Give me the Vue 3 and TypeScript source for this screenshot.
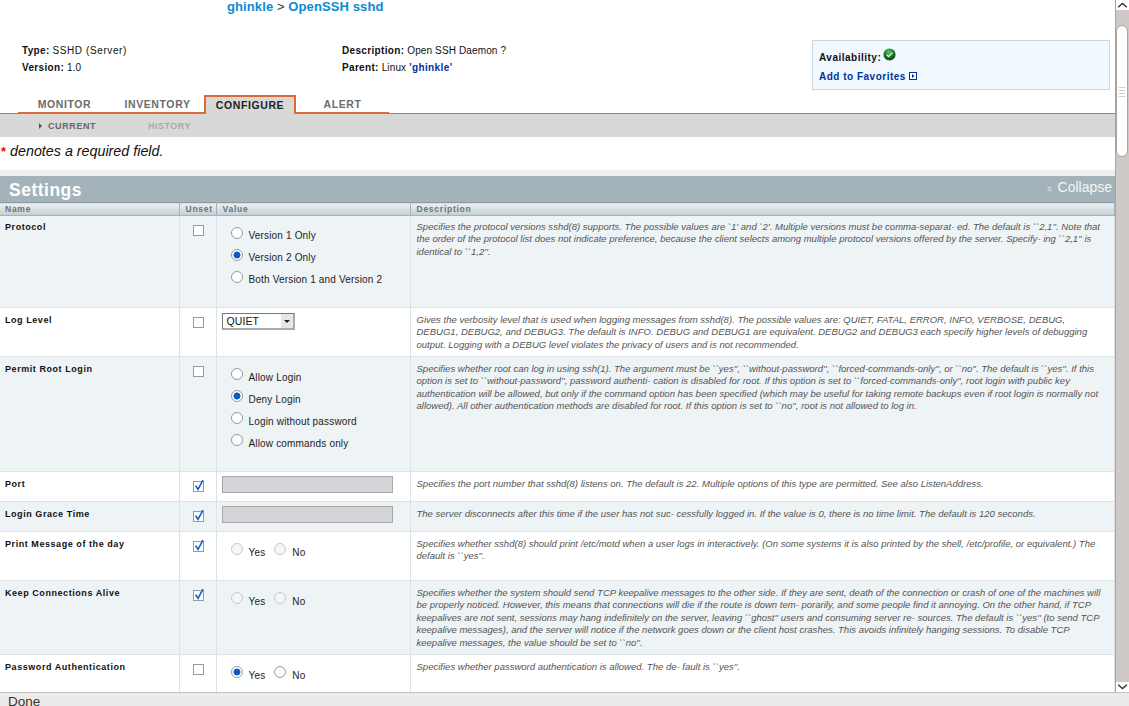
<script setup lang="ts">
type Kind = 'stack' | 'inline' | 'select' | 'input'
interface Opt { label: string; checked?: boolean }
interface Row {
  name: string
  unset: boolean
  kind: Kind
  height: number
  options?: Opt[]
  disabled?: boolean
  desc: string[]
}
const tabs = [
  { label: 'MONITOR', active: false },
  { label: 'INVENTORY', active: false },
  { label: 'CONFIGURE', active: true },
  { label: 'ALERT', active: false },
]
const rows: Row[] = [
  {
    name: 'Protocol', unset: false, kind: 'stack', height: 92,
    options: [{ label: 'Version 1 Only' }, { label: 'Version 2 Only', checked: true }, { label: 'Both Version 1 and Version 2' }],
    desc: [
      "Specifies the protocol versions sshd(8) supports. The possible values are `1' and `2'. Multiple versions must be comma-separat- ed. The default is ``2,1''. Note that",
      "the order of the protocol list does not indicate preference, because the client selects among multiple protocol versions offered by the server. Specify- ing ``2,1'' is",
      "identical to ``1,2''.",
    ],
  },
  {
    name: 'Log Level', unset: false, kind: 'select', height: 49,
    desc: [
      'Gives the verbosity level that is used when logging messages from sshd(8). The possible values are: QUIET, FATAL, ERROR, INFO, VERBOSE, DEBUG,',
      'DEBUG1, DEBUG2, and DEBUG3. The default is INFO. DEBUG and DEBUG1 are equivalent. DEBUG2 and DEBUG3 each specify higher levels of debugging',
      'output. Logging with a DEBUG level violates the privacy of users and is not recommended.',
    ],
  },
  {
    name: 'Permit Root Login', unset: false, kind: 'stack', height: 115,
    options: [{ label: 'Allow Login' }, { label: 'Deny Login', checked: true }, { label: 'Login without password' }, { label: 'Allow commands only' }],
    desc: [
      "Specifies whether root can log in using ssh(1). The argument must be ``yes'', ``without-password'', ``forced-commands-only'', or ``no''. The default is ``yes''. If this",
      "option is set to ``without-password'', password authenti- cation is disabled for root. If this option is set to ``forced-commands-only'', root login with public key",
      'authentication will be allowed, but only if the command option has been specified (which may be useful for taking remote backups even if root login is normally not',
      "allowed). All other authentication methods are disabled for root. If this option is set to ``no'', root is not allowed to log in.",
    ],
  },
  {
    name: 'Port', unset: true, kind: 'input', height: 30,
    desc: ['Specifies the port number that sshd(8) listens on. The default is 22. Multiple options of this type are permitted. See also ListenAddress.'],
  },
  {
    name: 'Login Grace Time', unset: true, kind: 'input', height: 30,
    desc: ['The server disconnects after this time if the user has not suc- cessfully logged in. If the value is 0, there is no time limit. The default is 120 seconds.'],
  },
  {
    name: 'Print Message of the day', unset: true, kind: 'inline', height: 49, disabled: true,
    options: [{ label: 'Yes' }, { label: 'No' }],
    desc: [
      'Specifies whether sshd(8) should print /etc/motd when a user logs in interactively. (On some systems it is also printed by the shell, /etc/profile, or equivalent.) The',
      "default is ``yes''.",
    ],
  },
  {
    name: 'Keep Connections Alive', unset: true, kind: 'inline', height: 74, disabled: true,
    options: [{ label: 'Yes' }, { label: 'No' }],
    desc: [
      'Specifies whether the system should send TCP keepalive messages to the other side. If they are sent, death of the connection or crash of one of the machines will',
      'be properly noticed. However, this means that connections will die if the route is down tem- porarily, and some people find it annoying. On the other hand, if TCP',
      "keepalives are not sent, sessions may hang indefinitely on the server, leaving ``ghost'' users and consuming server re- sources. The default is ``yes'' (to send TCP",
      'keepalive messages), and the server will notice if the network goes down or the client host crashes. This avoids infinitely hanging sessions. To disable TCP',
      "keepalive messages, the value should be set to ``no''.",
    ],
  },
  {
    name: 'Password Authentication', unset: false, kind: 'inline', height: 49,
    options: [{ label: 'Yes', checked: true }, { label: 'No' }],
    desc: ["Specifies whether password authentication is allowed. The de- fault is ``yes''."],
  },
]
</script>

<template>
  <div class="window">
    <div class="viewport">
      <main class="page">
        <h1 class="crumb"><a>ghinkle</a> <span>&gt;</span> <a>OpenSSH sshd</a></h1>

        <section class="summary">
          <div class="meta">
            <div><b>Type:</b> <span class="wide">SSHD (Server)</span></div>
            <div><b>Description:</b> Open SSH Daemon ?</div>
            <div><b>Version:</b> 1.0</div>
            <div><b>Parent:</b> Linux <a class="link">'ghinkle'</a></div>
          </div>
          <aside class="avail">
            <div class="avail-line">
              <b>Availability:</b>
              <svg class="ball" viewBox="0 0 14 14" width="13" height="13">
                <defs>
                  <radialGradient id="g" cx="45%" cy="30%" r="75%">
                    <stop offset="0" stop-color="#6cc46a" />
                    <stop offset="0.5" stop-color="#1a7d26" />
                    <stop offset="1" stop-color="#07330e" />
                  </radialGradient>
                </defs>
                <circle cx="7" cy="7" r="6.5" fill="url(#g)" />
                <path d="M4 7.4 6.2 9.3 10.2 5" fill="none" stroke="#d8f5d6" stroke-width="1.5" />
              </svg>
            </div>
            <a class="fav">Add to Favorites
              <svg viewBox="0 0 8 8" width="8" height="8">
                <rect x="0.5" y="0.5" width="7" height="7" fill="#fff" stroke="#003399" />
                <path d="M3 2 5.5 4 3 6Z" fill="#003399" />
              </svg>
            </a>
          </aside>
        </section>

        <nav class="tabs">
          <div class="tab-set">
            <a v-for="t in tabs" :key="t.label" class="tab" :class="{ active: t.active }">{{ t.label }}</a>
          </div>
        </nav>
        <div class="subnav">
          <a class="sub current"><i class="caret"></i>CURRENT</a>
          <a class="sub history">HISTORY</a>
        </div>

        <p class="required"><span class="star">*</span> denotes a required field.</p>

        <section class="settings">
          <header class="settings-head">
            <h2>Settings</h2>
            <a class="collapse">
              <svg viewBox="0 0 6 7" width="5" height="6">
                <path d="M.8 3 3 1 5.2 3M.8 6 3 4 5.2 6" fill="none" stroke="#fff" />
              </svg>
              Collapse
            </a>
          </header>
          <table class="grid">
            <colgroup>
              <col class="c-name" /><col class="c-unset" /><col class="c-value" /><col />
            </colgroup>
            <thead>
              <tr>
                <th>Name</th><th>Unset</th><th>Value</th><th>Description</th>
              </tr>
            </thead>
            <tbody>
              <tr v-for="(r, i) in rows" :key="r.name" :class="{ alt: i % 2 === 0 }" :style="{ height: r.height + 'px' }">
                <td class="name">{{ r.name }}</td>
                <td class="unset">
                  <span class="check">
                    <svg v-if="r.unset" viewBox="0 0 12 14" width="12" height="14">
                      <path d="M2.6 6.6 5 10.4 10 1.2" fill="none" stroke="#1466c8" stroke-width="1.7" />
                    </svg>
                  </span>
                </td>
                <td class="value">
                  <div v-if="r.kind === 'stack'" class="stack">
                    <label v-for="o in r.options" :key="o.label" class="opt">
                      <span class="radio" :class="{ on: o.checked }"></span>{{ o.label }}
                    </label>
                  </div>
                  <div v-else-if="r.kind === 'inline'" class="inline">
                    <label v-for="o in r.options" :key="o.label" class="opt">
                      <span class="radio" :class="{ on: o.checked, off: r.disabled }"></span>{{ o.label }}
                    </label>
                  </div>
                  <div v-else-if="r.kind === 'select'" class="select">
                    <span>QUIET</span><i class="drop"></i>
                  </div>
                  <div v-else class="field"></div>
                </td>
                <td class="desc">
                  <div v-for="(line, j) in r.desc" :key="j">{{ line }}</div>
                </td>
              </tr>
            </tbody>
          </table>
        </section>
      </main>
      <div class="scrollbar">
        <svg class="sb-arrow" viewBox="0 0 12 8" width="12" height="8"><path d="M2 6 6 2.5 10 6" fill="none" stroke="#333" stroke-width="1.3" /></svg>
        <div class="sb-track">
          <div class="sb-thumb"><i class="grip"></i></div>
        </div>
        <svg class="sb-arrow down" viewBox="0 0 12 8" width="12" height="8"><path d="M2 2 6 5.5 10 2" fill="none" stroke="#333" stroke-width="1.3" /></svg>
      </div>
    </div>
    <footer class="status">Done</footer>
  </div>
</template>

<style>
html, body { margin: 0; overflow: hidden; background: #fff; }
</style>

<style scoped>
.window {
  width: 1129px;
  height: 706px;
  display: flex;
  flex-direction: column;
  overflow: hidden;
  font-family: "Liberation Sans", Arial, sans-serif;
  color: #111;
}
.viewport { flex: 1; min-height: 0; display: flex; overflow: hidden; }
.page { width: 1115px; flex: none; overflow: hidden; }
.crumb {
  margin: 0;
  padding-left: 227px;
  height: 13px;
  line-height: 13px;
  font-size: 13px;
  font-weight: bold;
  letter-spacing: 0.1px;
  color: #0a8ad0;
}
.crumb span { font-weight: normal; color: #333; }
.summary { position: relative; height: 82px; }
.meta {
  padding: 31px 0 0 22px;
  display: grid;
  grid-template-columns: 320px 1fr;
  grid-auto-rows: 17px;
  font-size: 10px;
  line-height: 13px;
  letter-spacing: 0.13px;
}
.meta b { letter-spacing: 0.33px; }
.wide { letter-spacing: 0.6px; }
.link { color: #003399; font-weight: bold; letter-spacing: 0.4px; }
.avail {
  position: absolute;
  left: 812px;
  top: 27px;
  width: 298px;
  height: 50px;
  box-sizing: border-box;
  border: 1px solid #ccd5de;
  background: #f1f8ff;
  padding-left: 6px;
  font-size: 10px;
  letter-spacing: 0.5px;
}
.avail-line { height: 19px; padding-top: 6px; display: flex; align-items: flex-start; gap: 2px; line-height: 21px; }
.ball { margin-top: 1px; }
.fav { display: block; margin-top: 4px; line-height: 13px; color: #003399; font-weight: bold; }
.tabs { height: 18px; border-bottom: 1px solid #dc6a35; }
.tab-set {
  margin-left: 18px;
  width: 371px;
  height: 17px;
  display: grid;
  grid-template-columns: 93px 93px 92px 93px;
  border-bottom: 1px solid #dc6a35;
}
.tab {
  font-size: 10.5px;
  font-weight: bold;
  letter-spacing: 0.6px;
  color: #6b6b6b;
  text-align: center;
  line-height: 19px;
}
.tab.active {
  height: 19px;
  box-sizing: border-box;
  border: 2px solid #dc6a35;
  border-bottom: 0;
  background: #d8d8d8;
  color: #222;
  line-height: 17px;
}
.subnav {
  height: 23px;
  box-sizing: border-box;
  padding: 1px 0 0 39px;
  background: #d8d8d8;
  display: flex;
  align-items: center;
  font-size: 9px;
  font-weight: bold;
  letter-spacing: 0.6px;
}
.sub { line-height: 22px; }
.current { color: #666; display: flex; align-items: center; width: 109px; }
.history { color: #a8a8a8; letter-spacing: 0.5px; }
.caret {
  width: 0; height: 0;
  margin-right: 6px;
  border-left: 3px solid #555;
  border-top: 3px solid transparent;
  border-bottom: 3px solid transparent;
}
.required {
  margin: 0;
  height: 33px;
  padding-left: 1px;
  box-sizing: border-box;
  font-size: 14.3px;
  line-height: 28px;
  font-style: italic;
}
.star { color: #f00; font-style: normal; font-weight: bold; font-size: 13px; }
.settings { border-top: 6px solid #eceef0; }
.settings-head {
  height: 26px;
  background: #a4b2b9;
  display: flex;
  justify-content: space-between;
  color: #fff;
}
.settings-head h2 {
  margin: 0;
  padding-left: 9px;
  font-size: 17.5px;
  line-height: 28px;
  letter-spacing: 0.5px;
}
.collapse { font-size: 14px; line-height: 22px; padding-right: 3px; color: #f4f6f7; }
.collapse svg { margin-right: 2px; }
.grid { width: 1115px; table-layout: fixed; border-collapse: collapse; }
.c-name { width: 179px; }
.c-unset { width: 37px; }
.c-value { width: 194px; }
.grid th {
  height: 12px;
  padding: 0 0 0 6px;
  text-align: left;
  font-size: 8.5px;
  line-height: 12px;
  font-weight: bold;
  letter-spacing: 0.75px;
  color: #6d7478;
  background: linear-gradient(#eaeff1, #c3cfd5);
  border-top: 1px solid #8c9ba3;
  border-bottom: 1px solid #a4b2b9;
  border-left: 1px solid #a4b2b9;
  border-right: 1px solid #a4b2b9;
}
.grid th:first-child { border-left: 0; padding-left: 5px; }
.grid td {
  padding: 0;
  vertical-align: top;
  border: 1px solid #dce3e7;
  overflow: hidden;
}
.grid tr td:first-child { border-left: 0; }
.grid tr.alt { background: #eef3f6; }
.name {
  padding: 6px 0 0 5px;
  font-size: 9px;
  font-weight: bold;
  line-height: 12px;
  letter-spacing: 0.56px;
  color: #111;
}
.grid td.name, .grid td.desc { padding-top: 6px; }
.grid td.name { padding-left: 5px; }
.grid td.desc { padding-left: 6px; }
.grid tbody tr:first-child td.name,
.grid tbody tr:first-child td.desc { padding-top: 5px; }
.grid tbody tr:first-child .opt { line-height: 26px; }
.unset { text-align: left; }
.check {
  display: block;
  position: relative;
  width: 11px;
  height: 11px;
  margin: 9px 0 0 13px;
  border: 1px solid #999;
  background: #fff;
  box-sizing: border-box;
}
.check svg { position: absolute; left: -1px; top: -3px; }
.stack { padding: 7px 0 0 14px; }
.inline { padding: 7px 0 0 14px; display: flex; gap: 9px; }
.opt {
  display: flex;
  align-items: flex-start;
  height: 22px;
  font-size: 10px;
  line-height: 28px;
  letter-spacing: 0.17px;
  color: #222;
}
.radio {
  flex: none;
  width: 12px;
  height: 12px;
  margin: 4px 6px 0 0;
  box-sizing: border-box;
  border: 1px solid #9a9a9a;
  border-radius: 50%;
  background: #fff;
}
.radio.off { border-color: #c6c6c6; background: #f6f6f6; }
.radio.on { background: radial-gradient(circle, #0a5cc4 0 3.2px, #fff 3.8px); }
.select {
  margin: 5px 0 0 5px;
  width: 73px;
  height: 17px;
  box-sizing: border-box;
  border: 1px solid #777;
  border-right: 2px solid #aaa;
  border-bottom: 2px solid #aaa;
  background: #fff;
  display: flex;
  justify-content: space-between;
  font-size: 10.5px;
  line-height: 14px;
  padding-left: 4px;
}
.select span { letter-spacing: 0.1px; }
.drop {
  width: 12px;
  height: 14px;
  background: #e6e6e6;
  position: relative;
}
.drop::after {
  content: "";
  position: absolute;
  left: 3px;
  top: 6px;
  border-top: 3px solid #222;
  border-left: 3px solid transparent;
  border-right: 3px solid transparent;
}
.field {
  margin: 4px 0 0 5px;
  width: 171px;
  height: 17px;
  box-sizing: border-box;
  border: 1px solid #a8a8a8;
  background: #d3d3d8;
}
.desc {
  font-size: 9.5px;
  line-height: 12.4px;
  letter-spacing: 0.012px;
  font-style: italic;
  color: #555;
  white-space: nowrap;
}
.scrollbar {
  width: 14px;
  flex: none;
  box-sizing: border-box;
  border-left: 1px solid #a9a4a2;
  background: #cfcac8;
  display: flex;
  flex-direction: column;
}
.sb-arrow { background: #fff; flex: none; width: 13px; height: 10px; }
.sb-track { flex: 1; padding-top: 15px; }
.sb-thumb {
  width: 12px;
  height: 132px;
  box-sizing: border-box;
  border: 1px solid #a9a4a2;
  border-radius: 6px;
  background: #fff;
  position: relative;
}
.grip {
  position: absolute;
  left: 2px;
  top: 61px;
  width: 6px;
  height: 10px;
  background: repeating-linear-gradient(#ccc 0 1px, transparent 1px 3px);
}
.status {
  height: 14px;
  flex: none;
  box-sizing: border-box;
  border-top: 1px solid #c4c2c0;
  background: #ecebe9;
  padding-left: 8px;
  font-size: 13.5px;
  line-height: 18px;
  color: #333;
  overflow: hidden;
}
</style>
